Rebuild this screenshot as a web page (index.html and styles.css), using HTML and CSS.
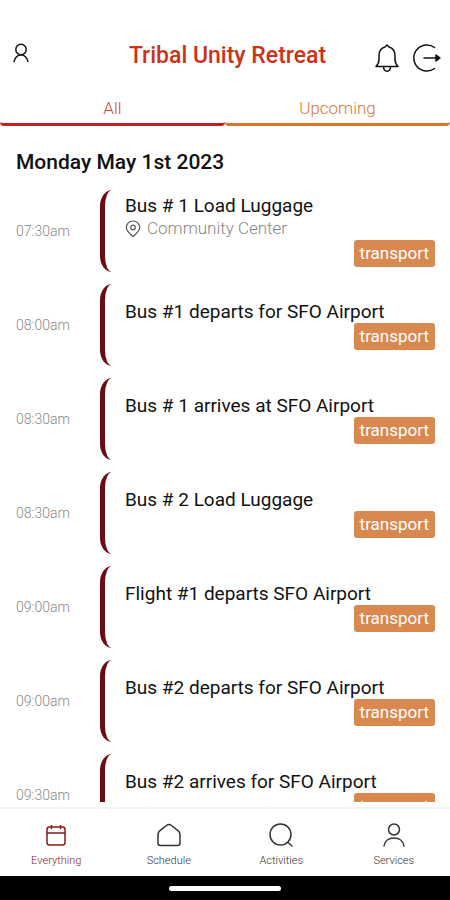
FILE: index.html
```html
<!DOCTYPE html>
<html lang="en">
<head>
    <meta charset="UTF-8">
    <meta name="viewport" content="width=device-width, initial-scale=1.0">
    <title>Tribal Unity Retreat</title>
    <link rel="stylesheet" href="styles.css">
</head>
<body>
    <header class="header">
        <button class="icon-btn profile-btn" type="button" aria-label="Profile">
            <svg width="16" height="20" viewBox="0 0 16 20"><circle cx="8" cy="6.500" r="5.200"/><path d="M8 11.700C5 12 2 14.500 1 18.500M8 11.700c3 .3 6 2.800 7 6.800"/></svg>
        </button>
        <h1 class="title">Tribal Unity Retreat</h1>
        <div class="actions">
            <button class="icon-btn" type="button" aria-label="Notifications">
                <svg width="26" height="30" viewBox="0 0 26 30"><path d="M2 23.500c2-2 3-4 3-7v-4c0-4.500 2.500-7.500 6-8.500l2-2 2 2c3.500 1 6 4 6 8.500v4c0 3 1 5 3 7zM9.500 24c.3 2.800 1.600 4.200 3.500 4.200s3.200-1.400 3.500-4.200"/></svg>
            </button>
            <button class="icon-btn" type="button" aria-label="Log out">
                <svg width="30" height="30" viewBox="0 0 30 30"><path d="M22.500 4.500A13 13 0 1 0 22.500 25.500M12 15h14"/><path d="M24 12l4 3-4 3z" fill="currentColor"/></svg>
            </button>
        </div>
    </header>

    <div class="tabs" role="tablist">
        <button class="tab tab-all" type="button" role="tab" aria-selected="true">All</button>
        <button class="tab tab-upcoming" type="button" role="tab" aria-selected="false">Upcoming</button>
    </div>

    <main class="schedule">
        <h2 class="date">Monday May 1st 2023</h2>
        <ul class="events">
            <li class="event">
                <time class="time">07:30am</time>
                <div class="details">
                    <h3 class="name">Bus # 1 Load Luggage</h3>
                    <p class="location">
                        <svg width="16" height="18" viewBox="0 0 16 18"><path d="M8 16.500C4.500 13.500 1.300 11 1.300 7.500a6.700 6.500 0 0 1 13.400 0c0 3.500-3.200 6-6.700 9z"/><circle cx="8" cy="7.500" r="2.300"/></svg>
                        Community Center
                    </p>
                    <span class="tag">transport</span>
                </div>
            </li>
            <li class="event">
                <time class="time">08:00am</time>
                <div class="details">
                    <h3 class="name">Bus #1 departs for SFO Airport</h3>
                    <span class="tag">transport</span>
                </div>
            </li>
            <li class="event">
                <time class="time">08:30am</time>
                <div class="details">
                    <h3 class="name">Bus # 1 arrives at SFO Airport</h3>
                    <span class="tag">transport</span>
                </div>
            </li>
            <li class="event">
                <time class="time">08:30am</time>
                <div class="details">
                    <h3 class="name">Bus # 2 Load Luggage</h3>
                    <span class="tag">transport</span>
                </div>
            </li>
            <li class="event">
                <time class="time">09:00am</time>
                <div class="details">
                    <h3 class="name">Flight #1 departs SFO Airport</h3>
                    <span class="tag">transport</span>
                </div>
            </li>
            <li class="event">
                <time class="time">09:00am</time>
                <div class="details">
                    <h3 class="name">Bus #2 departs for SFO Airport</h3>
                    <span class="tag">transport</span>
                </div>
            </li>
            <li class="event">
                <time class="time">09:30am</time>
                <div class="details">
                    <h3 class="name">Bus #2 arrives for SFO Airport</h3>
                    <span class="tag">transport</span>
                </div>
            </li>
        </ul>
    </main>

    <nav class="bottom-nav">
        <a class="nav-link active" href="#everything">
            <svg width="24" height="24" viewBox="0 0 24 24"><rect x="3" y="4" width="18" height="18" rx="2.500"/><path d="M3 10h18M7.500 2.500v3M16.500 2.500v3"/></svg>
            Everything
        </a>
        <a class="nav-link" href="#schedule">
            <svg width="24" height="24" viewBox="0 0 24 24"><path d="M1 11.500c0-1.600.6-2.700 2-3.800L9.500 2.500c1.600-1.200 3.400-1.200 5 0L21 7.700c1.400 1.100 2 2.200 2 3.800V20c0 1.500-1 2.500-2.500 2.500h-17C2 22.500 1 21.500 1 20z"/></svg>
            Schedule
        </a>
        <a class="nav-link" href="#activities">
            <svg width="24" height="24" viewBox="0 0 24 24"><circle cx="11.500" cy="11.500" r="10.500"/><path d="M19.500 20l3.500 3"/></svg>
            Activities
        </a>
        <a class="nav-link" href="#services">
            <svg width="24" height="24" viewBox="0 0 24 24"><circle cx="12" cy="6.500" r="5.500"/><path d="M2 23c.8-5 4.800-8 10-8s9.200 3 10 8"/></svg>
            Services
        </a>
    </nav>

    <div class="system-bar">
        <div class="home-handle"></div>
    </div>
</body>
</html>
```
FILE: styles.css
```css
* {
    box-sizing: border-box;
}
body {
    font-family: Roboto, "Liberation Sans", sans-serif;
    background-color: #fff;
    color: #111;
    display: flex;
    flex-direction: column;
    height: 100vh;
    margin: 0;
}
h1, h2, h3, p, ul {
    margin: 0;
    padding: 0;
}
button {
    font-family: inherit;
    background: none;
    border: none;
    padding: 0;
    cursor: pointer;
}
svg {
    display: block;
    fill: none;
    stroke: currentColor;
    stroke-width: 1.5;
    stroke-linecap: round;
    stroke-linejoin: round;
}
.header {
    display: grid;
    grid-template-columns: 1fr auto 1fr;
    align-items: center;
    padding: 39px 8px 0 13px;
}
.icon-btn {
    color: #111;
}
.profile-btn {
    justify-self: start;
    padding-bottom: 6px;
}
.title {
    font-size: 23px;
    line-height: 32px;
    font-weight: 500;
    color: #cc3218;
}
.actions {
    display: flex;
    justify-content: flex-end;
    gap: 12px;
    padding-top: 4px;
}
.tabs {
    display: flex;
    margin-top: 19px;
}
.tab {
    flex: 1;
    height: 34px;
    border-bottom: 3px solid;
    border-radius: 4px;
    font-size: 17px;
    font-weight: 300;
}
.tab-all {
    color: #d04a38;
    border-color: #c41e1e;
}
.tab-upcoming {
    color: #d5783a;
    border-color: #d5762c;
}
.schedule {
    flex: 1;
    min-height: 0;
    overflow-y: auto;
    scrollbar-width: none;
    margin-bottom: 5px;
    padding: 24px 15px 0 16px;
}
.date {
    font-size: 21px;
    line-height: 24px;
    font-weight: 500;
}
.events {
    list-style: none;
    display: flex;
    flex-direction: column;
    gap: 12px;
    margin-top: 16px;
}
.event {
    display: flex;
    align-items: center;
    height: 82px;
}
.time {
    width: 84px;
    font-size: 14px;
    font-weight: 300;
    color: #888;
}
/* curved bracket on the left of each event */
.event::before {
    content: "";
    order: 1;
    width: 7px;
    height: 82px;
    border-left: 5px solid #6b0d12;
    border-radius: 12px 0 0 12px / 16px 0 0 16px;
}
.details {
    order: 2;
    flex: 1;
    display: flex;
    flex-direction: column;
    padding-left: 13px;
}
.name {
    font-size: 19px;
    line-height: 22px;
    font-weight: 400;
}
.location {
    display: flex;
    align-items: center;
    gap: 6px;
    font-size: 17px;
    line-height: 23px;
    font-weight: 300;
    color: #888;
}
.location svg {
    color: #555;
    stroke-width: 1.2;
}
.tag {
    align-self: flex-end;
    padding: 0 6px;
    border-radius: 3px;
    background-color: #d98850;
    color: #fff;
    font-size: 17px;
    line-height: 27px;
}
.bottom-nav {
    display: flex;
    height: 69px;
    border-top: 2px solid #f4f4f4;
}
.nav-link {
    flex: 1;
    display: flex;
    flex-direction: column;
    align-items: center;
    gap: 7px;
    padding-top: 14px;
    color: #333;
    font-size: 11px;
    line-height: 14px;
    font-weight: 300;
    text-decoration: none;
}
.nav-link.active {
    color: #8b1a1a;
}
.system-bar {
    display: flex;
    justify-content: center;
    align-items: center;
    height: 24px;
    background-color: #000;
}
.home-handle {
    width: 25%;
    height: 5px;
    border-radius: 3px;
    background-color: #fff;
}
```
